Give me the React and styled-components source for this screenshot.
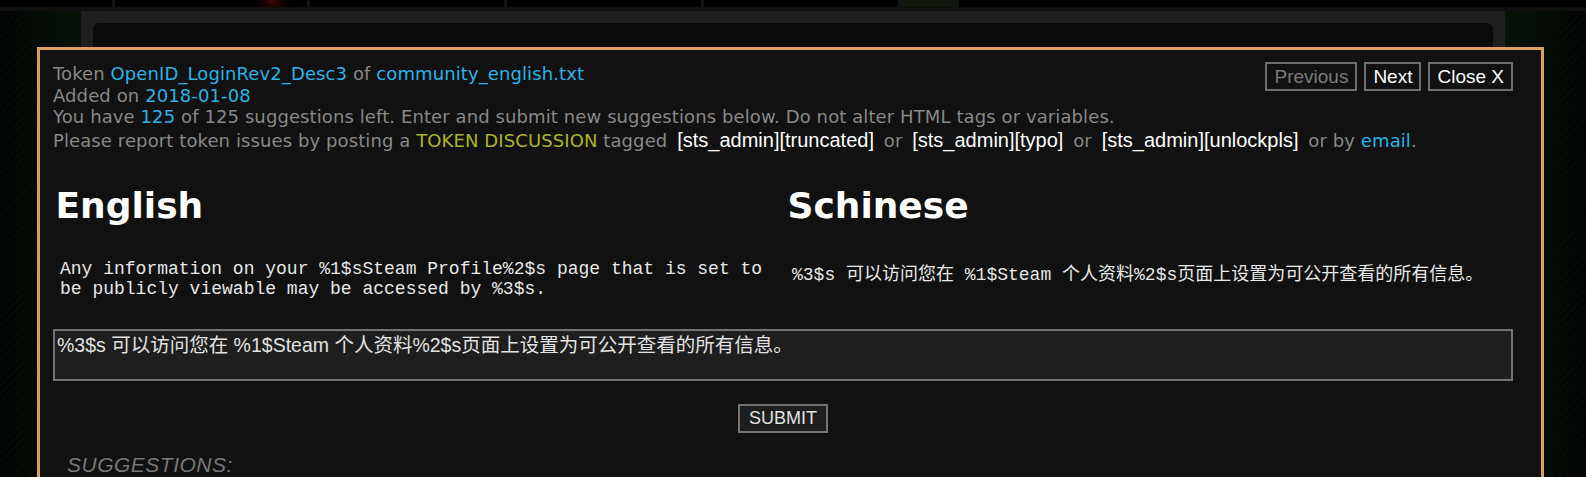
import React from "react";
import styled, { createGlobalStyle } from "styled-components";

const tabs = [
  { width: 115 },
  { width: 195, glow: true },
  { width: 197 },
  { width: 197 },
  { width: 197 },
  { width: 58, green: true },
];

const GlobalStyle = createGlobalStyle`
  html, body {
    margin: 0;
    padding: 0;
    background: #000;
    overflow: hidden;
  }
  #root {
    height: 100vh;
  }
`;

const Page = styled.div`
  position: relative;
  height: 100vh;
  display: flex;
  flex-direction: column;
`;

const TopStrip = styled.div`
  height: 7px;
  display: flex;
  background: #000;
`;

const Tab = styled.div`
  width: ${(p) => p.$width}px;
  height: 7px;
  box-sizing: border-box;
  border-right: 3px solid #151515;
  background: ${(p) =>
    p.$green
      ? "#12180e"
      : p.$glow
      ? "radial-gradient(circle at 158px 0px, #3a0606 0, #120202 10px, #020202 18px)"
      : "#020202"};
`;

const Seam = styled.div`
  height: 4px;
  background: #0f0f0f;
`;

const Body = styled.div`
  flex: 1;
  display: grid;
  grid-template-columns: 81px 1fr 81px;
`;

const SideColumn = styled.div`
  background: repeating-linear-gradient(
      135deg,
      rgba(20, 60, 25, 0.07) 0 2px,
      rgba(0, 0, 0, 0) 2px 6px
    ),
    linear-gradient(
      ${(p) => (p.$right ? "270deg" : "90deg")},
      #020402 0%,
      #061107 100%
    );
`;

const Middle = styled.div`
  background: #1f1f1f;
  padding: 12px 12px 0 12px;
`;

const Panel = styled.div`
  height: 100%;
  background: #0b0b0b;
  border-radius: 6px 6px 0 0;
`;

const Modal = styled.div`
  position: absolute;
  left: 37px;
  top: 47px;
  width: 1507px;
  height: 470px;
  box-sizing: border-box;
  border: 3px solid #d9a25f;
  background: #111111;
  padding: 13px;
  font-family: "DejaVu Sans", Verdana, sans-serif;
  font-size: 18px;
  letter-spacing: 0.1px;
  line-height: 21.7px;
  color: #888888;
`;

const NavButtons = styled.div`
  float: right;
  display: flex;
  gap: 7px;
  margin: -1px 15px 0 0;
`;

const NavButton = styled.button`
  height: 29px;
  padding: 0 7px;
  border: 2px solid #6e6e6e;
  background: transparent;
  color: ${(p) => (p.$muted ? "#7a7a7a" : "#ffffff")};
  font-family: "Liberation Sans", Arial, sans-serif;
  font-size: 19px;
  cursor: pointer;
`;

const Line = styled.div``;

const Link = styled.a`
  color: #2bb3e6;
  text-decoration: none;
`;

const Discussion = styled.span`
  color: #aab42a;
`;

const Tag = styled.span`
  color: #ffffff;
  font-family: "Liberation Sans", Arial, sans-serif;
  font-size: 20px;
  letter-spacing: 0;
  line-height: 25px;
  margin: 0 4px;
`;

const Columns = styled.div`
  display: grid;
  grid-template-columns: 732px 1fr;
  margin-top: 32px;
`;

const Column = styled.div``;

const LangHeading = styled.h1`
  margin: 0 0 32px 2.5px;
  font-family: "DejaVu Sans", Verdana, sans-serif;
  font-weight: bold;
  font-size: 36px;
  letter-spacing: 0;
  line-height: 42px;
  color: #ffffff;
`;

const Source = styled.div`
  padding: 0 7px;
  font-family: "Liberation Mono", "Noto Sans CJK SC", monospace;
  font-size: 18px;
  letter-spacing: 0;
  line-height: normal;
  color: #e8e8e8;
`;

const SuggestionBox = styled.textarea`
  display: block;
  width: 1460px;
  height: 52px;
  margin-top: 30px;
  box-sizing: border-box;
  padding: 3px 2px 0;
  border: 2px solid #737373;
  background: #1e1e1e;
  color: #e2e2e2;
  font-family: "Liberation Sans", "Noto Sans CJK SC", sans-serif;
  font-size: 19.5px;
  line-height: 22px;
  resize: none;
  overflow: hidden;
  outline: none;
`;

const SubmitRow = styled.div`
  width: 1460px;
  margin-top: 23px;
  text-align: center;
`;

const SubmitButton = styled.button`
  height: 29px;
  padding: 0 8.5px;
  border: 2px solid #737373;
  background: #1e1e1e;
  color: #e0e0e0;
  font-family: "Liberation Sans", Arial, sans-serif;
  font-size: 18px;
`;

const SuggestionsLabel = styled.div`
  margin: 20px 0 0 14px;
  font-family: "Liberation Sans", Arial, sans-serif;
  font-style: italic;
  font-size: 21px;
  letter-spacing: 0.5px;
  line-height: normal;
  color: #777777;
`;

const translation =
  "%3$s 可以访问您在 %1$Steam 个人资料%2$s页面上设置为可公开查看的所有信息。";

export default function App() {
  return (
    <>
      <GlobalStyle />
      <Page>
        <TopStrip>
          {tabs.map((t, i) => (
            <Tab key={i} $width={t.width} $glow={t.glow} $green={t.green} />
          ))}
        </TopStrip>
        <Seam />
        <Body>
          <SideColumn />
          <Middle>
            <Panel />
          </Middle>
          <SideColumn $right />
        </Body>

        <Modal>
          <NavButtons>
            <NavButton $muted>Previous</NavButton>
            <NavButton>Next</NavButton>
            <NavButton>Close X</NavButton>
          </NavButtons>
          <Line>
            Token <Link href="#">OpenID_LoginRev2_Desc3</Link> of{" "}
            <Link href="#">community_english.txt</Link>
          </Line>
          <Line>
            Added on <Link href="#">2018-01-08</Link>
          </Line>
          <Line>
            You have <Link href="#">125</Link> of 125 suggestions left. Enter
            and submit new suggestions below. Do not alter HTML tags or
            variables.
          </Line>
          <Line>
            Please report token issues by posting a{" "}
            <Discussion>TOKEN DISCUSSION</Discussion> tagged{" "}
            <Tag>[sts_admin][truncated]</Tag> or <Tag>[sts_admin][typo]</Tag>{" "}
            or <Tag>[sts_admin][unlockpls]</Tag> or by{" "}
            <Link href="#">email</Link>.
          </Line>

          <Columns>
            <Column>
              <LangHeading>English</LangHeading>
              <Source>
                Any information on your %1$sSteam Profile%2$s page that is set
                to be publicly viewable may be accessed by %3$s.
              </Source>
            </Column>
            <Column>
              <LangHeading>Schinese</LangHeading>
              <Source>{translation}</Source>
            </Column>
          </Columns>

          <SuggestionBox defaultValue={translation} spellCheck={false} />
          <SubmitRow>
            <SubmitButton>SUBMIT</SubmitButton>
          </SubmitRow>
          <SuggestionsLabel>SUGGESTIONS:</SuggestionsLabel>
        </Modal>
      </Page>
    </>
  );
}
